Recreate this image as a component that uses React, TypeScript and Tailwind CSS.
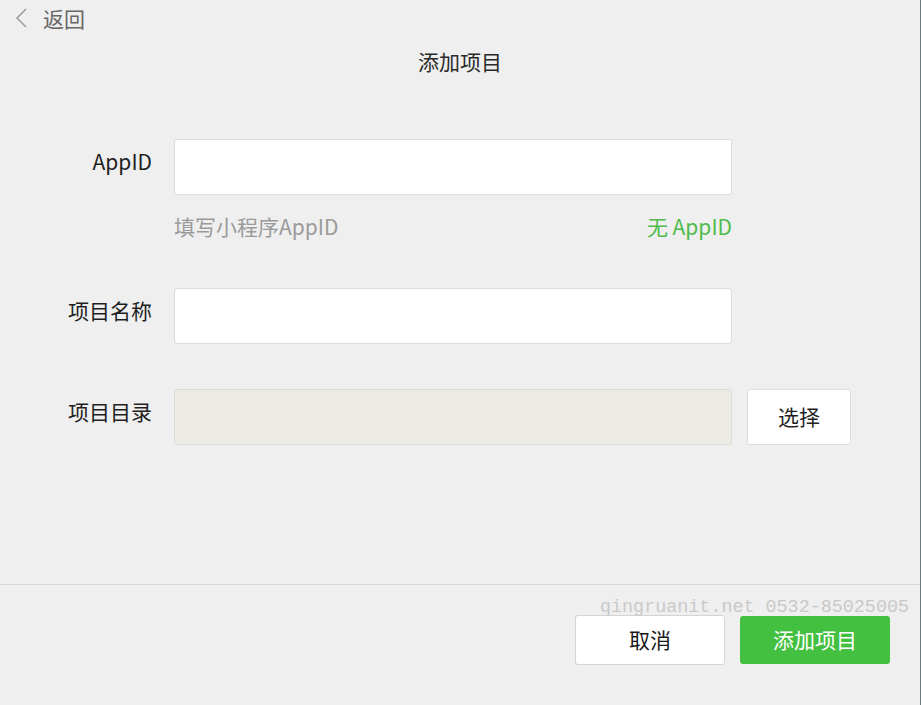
import { useState } from 'react'

const font = { fontFamily: '"Noto Sans CJK SC", "Liberation Sans", sans-serif' }

function Field({ label, children }: { label: string; children: React.ReactNode }) {
  return (
    <div className="flex items-start">
      <div className="w-[152px] shrink-0 text-right text-[21px] leading-[28px] mt-[8px] text-[#1f1f1f]">
        {label}
      </div>
      <div className="ml-[22px] flex items-start gap-[15px]">{children}</div>
    </div>
  )
}

export default function App() {
  const [appId, setAppId] = useState('')
  const [name, setName] = useState('')

  return (
    <div
      className="w-[921px] h-[705px] bg-[#efefef] border-r border-[#6b7b7b] flex flex-col relative overflow-hidden"
      style={font}
    >
      {/* top bar */}
      <div className="h-[36px] flex items-center pl-[14px] text-[#666] text-[21px]">
        <svg width="14" height="20" viewBox="0 0 14 20" fill="none" className="mr-[15px]">
          <path d="M12 1 L3 10 L12 19" stroke="#a0a0a0" strokeWidth="1.6" />
        </svg>
        <span className="leading-[28px]">返回</span>
      </div>

      <div className="mt-[11px] text-center text-[21px] leading-[28px] text-[#2a2a2a]">添加项目</div>

      <div className="mt-[64px] flex flex-col">
        <Field label="AppID">
          <input
            value={appId}
            onChange={(e) => setAppId(e.target.value)}
            className="w-[558px] h-[56px] bg-white border border-[#dcdcdc] rounded-[3px] outline-none px-3 text-[18px]"
          />
        </Field>

        <div className="mt-[17px] ml-[174px] w-[558px] flex justify-between text-[21px] leading-[28px]">
          <span className="text-[#9a9a9a]">填写小程序AppID</span>
          <span className="text-[#4fbb4b]">无 AppID</span>
        </div>

        <div className="mt-[48px]">
          <Field label="项目名称">
            <input
              value={name}
              onChange={(e) => setName(e.target.value)}
              className="w-[558px] h-[56px] bg-white border border-[#dcdcdc] rounded-[3px] outline-none px-3 text-[18px]"
            />
          </Field>
        </div>

        <div className="mt-[45px]">
          <Field label="项目目录">
            <div className="w-[558px] h-[56px] bg-[#ebebe4] border border-[#dcdcd6] rounded-[3px]" />
            <button className="w-[104px] h-[56px] bg-white border border-[#dcdcdc] rounded-[3px] text-[21px] text-[#1f1f1f]">
              选择
            </button>
          </Field>
        </div>
      </div>

      <div className="mt-auto border-t border-[#d6d6d6] pt-[30px] pb-[40px] pr-[30px] flex justify-end gap-[15px]">
        <button className="w-[150px] h-[50px] bg-white border border-[#d4d4d4] rounded-[3px] text-[21px] text-[#1a1a1a]">
          取消
        </button>
        <button className="w-[150px] h-[48px] mt-[1px] bg-[#44c040] rounded-[3px] text-[21px] text-white">
          添加项目
        </button>
      </div>

      {/* watermark */}
      <div
        className="absolute left-[600px] top-[596px] text-[18.4px] leading-[24px] text-[#c9c9c9] whitespace-nowrap"
        style={{ fontFamily: '"Liberation Mono", monospace' }}
      >
        qingruanit.net 0532-85025005
      </div>
    </div>
  )
}
